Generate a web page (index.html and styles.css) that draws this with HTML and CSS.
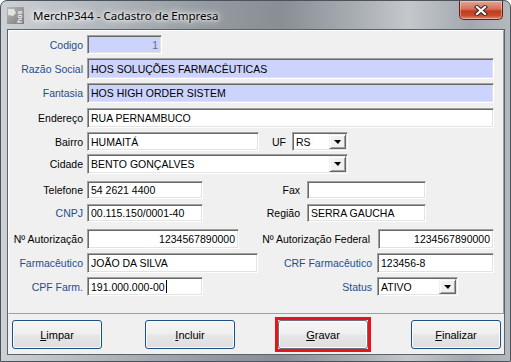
FILE: index.html
```html
<!DOCTYPE html>
<html lang="pt-BR">
<head>
  <meta charset="UTF-8">
  <title>MerchP344 - Cadastro de Empresa</title>
  <link rel="stylesheet" href="styles.css">
</head>
<body>
  <div class="window">
    <div class="titlebar">
      <svg class="app-icon" width="17" height="17" viewBox="0 0 17 17">
        <defs>
          <linearGradient id="ig" x1="0" y1="0" x2="1" y2="1">
            <stop offset="0" stop-color="#b9b9b9"/>
            <stop offset="1" stop-color="#7b7b7b"/>
          </linearGradient>
        </defs>
        <rect x="0" y="0" width="17" height="17" fill="url(#ig)"/>
        <path d="M1 2 L7 2 L9 6 L6 9 L1 8 Z" fill="#e2e2e2"/>
        <text x="0" y="0" transform="translate(15 16) rotate(-90)" font-family="Liberation Sans, sans-serif" font-size="7" font-weight="bold" fill="#f4f4f4">hos</text>
      </svg>
      <span class="title">MerchP344 - Cadastro de Empresa</span>
      <div class="close">
        <svg width="14" height="11" viewBox="0 0 14 11">
          <path d="M3 2 L11 9 M11 2 L3 9" stroke="#3a2a26" stroke-width="4.2" stroke-linecap="square"/>
          <path d="M3 2 L11 9 M11 2 L3 9" stroke="#ffffff" stroke-width="2.2" stroke-linecap="square"/>
        </svg>
      </div>
    </div>

    <div class="client">
      <div class="panel">
        <div class="row h19">
          <span class="lbl blue">Codigo</span>
          <div class="field lav num disabled f-codigo">1</div>
        </div>
        <div class="row h21">
          <span class="lbl blue">Razão Social</span>
          <div class="field lav f-full">HOS SOLUÇÕES FARMACÊUTICAS</div>
        </div>
        <div class="row h20">
          <span class="lbl blue">Fantasia</span>
          <div class="field lav f-full">HOS HIGH ORDER SISTEM</div>
        </div>
        <div class="row h20">
          <span class="lbl">Endereço</span>
          <div class="field f-full">RUA PERNAMBUCO</div>
        </div>
        <div class="row h19">
          <span class="lbl">Bairro</span>
          <div class="field f-bairro">HUMAITÁ</div>
          <span class="lbl lbl-uf">UF</span>
          <div class="field combo f-uf"><span class="value">RS</span><span class="drop"></span></div>
        </div>
        <div class="row h20">
          <span class="lbl">Cidade</span>
          <div class="field combo f-cidade"><span class="value">BENTO GONÇALVES</span><span class="drop"></span></div>
        </div>
        <div class="row h18">
          <span class="lbl">Telefone</span>
          <div class="field f-short">54 2621 4400</div>
          <span class="lbl lbl-fax">Fax</span>
          <div class="field f-fax"></div>
        </div>
        <div class="row h18">
          <span class="lbl blue">CNPJ</span>
          <div class="field f-short">00.115.150/0001-40</div>
          <span class="lbl lbl-fax">Região</span>
          <div class="field f-fax">SERRA GAUCHA</div>
        </div>
        <div class="row h20">
          <span class="lbl">Nº Autorização</span>
          <div class="field num f-aut">1234567890000</div>
          <span class="lbl lbl-fed">Nº Autorização Federal</span>
          <div class="field num f-autfed">1234567890000</div>
        </div>
        <div class="row h20">
          <span class="lbl blue">Farmacêutico</span>
          <div class="field f-farm">JOÃO DA SILVA</div>
          <span class="lbl blue lbl-crf">CRF Farmacêutico</span>
          <div class="field f-crf">123456-8</div>
        </div>
        <div class="row h19">
          <span class="lbl blue">CPF Farm.</span>
          <div class="field f-short">191.000.000-00<span class="caret"></span></div>
          <span class="lbl blue lbl-status">Status</span>
          <div class="field combo f-status"><span class="value">ATIVO</span><span class="drop"></span></div>
        </div>
      </div>

      <div class="actions">
        <button class="btn default"><u>L</u>impar</button>
        <button class="btn default"><u>I</u>ncluir</button>
        <span class="hilite"><button class="btn"><u>G</u>ravar</button></span>
        <button class="btn default"><u>F</u>inalizar</button>
      </div>
    </div>
  </div>
</body>
</html>
```

FILE: styles.css
```css
* {
  box-sizing: border-box;
}

body {
  margin: 0;
  font-family: "Liberation Sans", Arial, sans-serif;
  font-size: 10.5px;
  color: #000;
}

/* window frame */
.window {
  width: 511px;
  height: 362px;
  border: 1px solid #4b545c;
  border-radius: 7px 7px 0 0;
  padding: 0 5px 6px 6px;
  display: flex;
  flex-direction: column;
  background: linear-gradient(to right, #cdd1d5 0%, #b9bec3 14%, #959ba1 40%, #888e94 55%, #a9aeb3 70%, #c4c8cc 80%, #a2a8ae 92%, #b4b9be 100%);
}

.titlebar {
  height: 28px;
  flex-shrink: 0;
  display: flex;
  align-items: center;
}

.app-icon {
  display: block;
}

.title {
  margin-left: 9px;
  font-family: "Noto Sans", sans-serif;
  font-size: 11.5px;
  color: #000;
  text-shadow: 0 0 6px #fff, 0 0 10px #fff, 0 0 3px #fff;
}

.close {
  margin-left: auto;
  margin-right: 2px;
  align-self: flex-start;
  width: 44px;
  height: 19px;
  border: 1px solid #5c2217;
  border-top: none;
  border-radius: 0 0 5px 5px;
  background: linear-gradient(#e3a595 0%, #d6705a 45%, #c23c1e 55%, #c9492a 80%, #e08a6a 100%);
  box-shadow: inset 0 0 0 1px rgba(255, 255, 255, 0.35);
  display: flex;
  align-items: center;
  justify-content: center;
}

/* client area */
.client {
  flex: 1;
  border: 1px solid #5a636c;
  background: #f0f0f0;
  display: flex;
  flex-direction: column;
}

.panel {
  height: 284px;
  flex-shrink: 0;
  border: 1px solid;
  border-color: #fff #a0a0a0 #a0a0a0 #fff;
  padding-top: 4px;
  display: grid;
  grid-template-rows: 23px 25px 25px 24px 22px 27px 23px 25px 24px 24px 19px;
  align-content: start;
}

.row {
  display: flex;
  align-items: stretch;
}

.h18 { height: 18px; }
.h19 { height: 19px; }
.h20 { height: 20px; }
.h21 { height: 21px; }

.lbl {
  width: 74px;
  margin-right: 4px;
  display: flex;
  align-items: center;
  justify-content: flex-end;
  white-space: nowrap;
}

.lbl.blue {
  color: #1b4f8f;
}

.lbl-uf { width: 27px; margin-right: 6px; }
.lbl-fax { width: 97px; margin-right: 7px; }
.lbl-fed { width: 131px; margin-right: 8px; }
.lbl-crf { width: 114px; margin-right: 5px; }
.lbl-status { width: 169px; margin-right: 5px; }

.field {
  border: 1px solid;
  border-color: #a0a0a0 #fff #fff #a0a0a0;
  box-shadow: inset 1px 1px 0 #696969, inset -1px -1px 0 #e3e3e3;
  background: #fff;
  padding: 0 3px;
  display: flex;
  align-items: center;
  white-space: nowrap;
  overflow: hidden;
}

.field.lav { background: #ccd3fd; }
.field.num { justify-content: flex-end; }
.field.disabled { color: #6d6d6d; }

.f-codigo { width: 75px; }
.f-full { width: 407px; }
.f-bairro { width: 172px; }
.f-uf { width: 56px; }
.f-cidade { width: 261px; }
.f-short { width: 116px; }
.f-fax { width: 119px; }
.f-aut { width: 152px; }
.f-autfed { width: 116px; }
.f-farm { width: 171px; }
.f-crf { width: 117px; }
.f-status { width: 81px; }

.combo {
  padding-right: 1px;
}

.combo .value {
  flex: 1;
}

.drop {
  align-self: stretch;
  width: 17px;
  margin: 1px 0;
  background: #f0f0f0;
  border: 1px solid;
  border-color: #f0f0f0 #696969 #696969 #f0f0f0;
  box-shadow: inset 1px 1px 0 #fff, inset -1px -1px 0 #a0a0a0;
  display: flex;
  align-items: center;
  justify-content: center;
}

.drop::after {
  content: "";
  width: 0;
  height: 0;
  border-top: 4px solid #000;
  border-left: 4px solid transparent;
  border-right: 3px solid transparent;
}

.caret {
  display: inline-block;
  width: 1px;
  height: 13px;
  margin-left: 1px;
  background: #000;
}

/* buttons */
.actions {
  flex: 1;
  display: flex;
  justify-content: space-between;
  align-items: flex-start;
  padding: 6px 3px 0 4px;
}

.btn {
  display: block;
  width: 90px;
  height: 29px;
  padding: 0;
  border: 1px solid #6a737c;
  border-radius: 3px;
  background: linear-gradient(#f5f5f5 0%, #efefef 48%, #e6e6e6 52%, #dedede 100%);
  box-shadow: inset 0 0 0 1px #fbfbfb;
  font-family: "Liberation Sans", Arial, sans-serif;
  font-size: 11px;
  color: #000;
}

.btn.default {
  border-color: #1d4f80;
}

.hilite {
  display: block;
  margin: -3px;
  border: 3px solid #e8141c;
}
```
